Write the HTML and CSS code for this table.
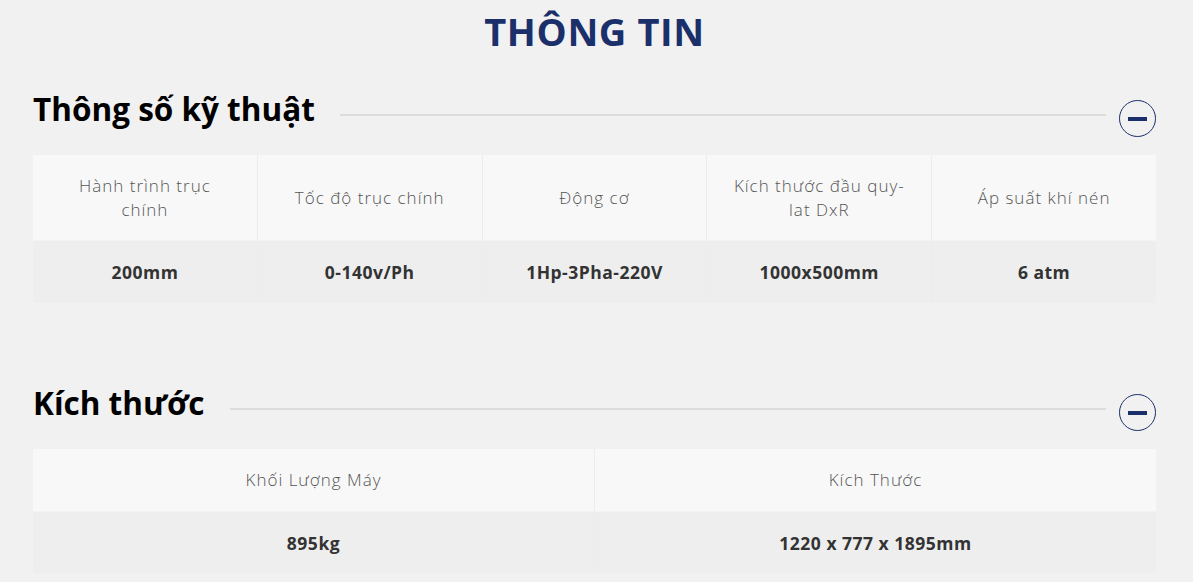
FILE: index.html
```html
<!DOCTYPE html>
<html lang="vi">
<head>
<meta charset="utf-8">
<link rel="stylesheet" href="styles.css">
</head>
<body>
<div class="page">
  <h1 class="title">THÔNG TIN</h1>

  <section class="block">
    <div class="block-head">
      <h2 class="block-title">Thông số kỹ thuật</h2>
      <span class="rule"></span>
      <span class="toggle"><span class="minus"></span></span>
    </div>
    <div class="table cols-5">
      <div class="row head">
        <div class="cell">Hành trình trục chính</div>
        <div class="cell">Tốc độ trục chính</div>
        <div class="cell">Động cơ</div>
        <div class="cell">Kích thước đầu quy-lat DxR</div>
        <div class="cell">Áp suất khí nén</div>
      </div>
      <div class="row data">
        <div class="cell">200mm</div>
        <div class="cell">0-140v/Ph</div>
        <div class="cell">1Hp-3Pha-220V</div>
        <div class="cell">1000x500mm</div>
        <div class="cell">6 atm</div>
      </div>
    </div>
  </section>

  <section class="block second">
    <div class="block-head">
      <h2 class="block-title">Kích thước</h2>
      <span class="rule"></span>
      <span class="toggle"><span class="minus"></span></span>
    </div>
    <div class="table cols-2">
      <div class="row head">
        <div class="cell">Khối Lượng Máy</div>
        <div class="cell">Kích Thước</div>
      </div>
      <div class="row data">
        <div class="cell">895kg</div>
        <div class="cell">1220 x 777 x 1895mm</div>
      </div>
    </div>
  </section>
</div>
</body>
</html>
```
FILE: styles.css
```css
* { box-sizing: border-box; }
html, body { margin: 0; padding: 0; }
body {
  background: #f1f1f1;
  font-family: "Open Sans", "Noto Sans", sans-serif;
  color: #333;
}
.page {
  margin: 0 37px 0 33px;
  padding-top: 6px;
}
.title {
  margin: 0;
  text-align: center;
  font-size: 38px;
  line-height: 50px;
  font-weight: 700;
  color: #1b2f6b;
  letter-spacing: 0.6px;
}
.block { margin-top: 32px; }
.block.second { margin-top: 79px; }
.block-head {
  display: flex;
  align-items: flex-start;
  height: 50px;
}
.block-title {
  margin: 1px 0 0 0;
  font-size: 31.5px;
  font-weight: 700;
  color: #000;
  white-space: nowrap;
  line-height: 40px;
}
.rule {
  flex: 1;
  height: 2px;
  background: #dcdcdc;
  margin: 26px 13px 0 25px;
}
.toggle {
  width: 37px;
  height: 37px;
  margin-top: 12px;
  border: 1.5px solid #1b2f6b;
  border-radius: 50%;
  display: flex;
  align-items: center;
  justify-content: center;
}
.minus {
  width: 19px;
  height: 4px;
  background: #1b2f6b;
}
.table { margin-top: 17px; }
.row { display: flex; }
.cell {
  flex: 1 1 0;
  display: flex;
  align-items: center;
  justify-content: center;
  text-align: center;
  padding: 0 22px;
  border-left: 1px solid #ececec;
}
.cell:first-child { border-left: none; }
.row.head { background: #f8f8f8; border-bottom: 1px solid #f3f3f3; }
.row.data { background: #eeeeee; }
.cols-5 .row.head { height: 86px; }
.cols-5 .row.data { height: 62px; }
.cols-2 .row.head { height: 63px; }
.cols-2 .row.data { height: 61px; }
.row.head .cell {
  font-size: 17px;
  font-weight: 300;
  color: #555;
  line-height: 24px;
  letter-spacing: 1px;
}
.row.data .cell {
  font-size: 17.5px;
  font-weight: 700;
  color: #333;
  letter-spacing: 0.5px;
}
```
